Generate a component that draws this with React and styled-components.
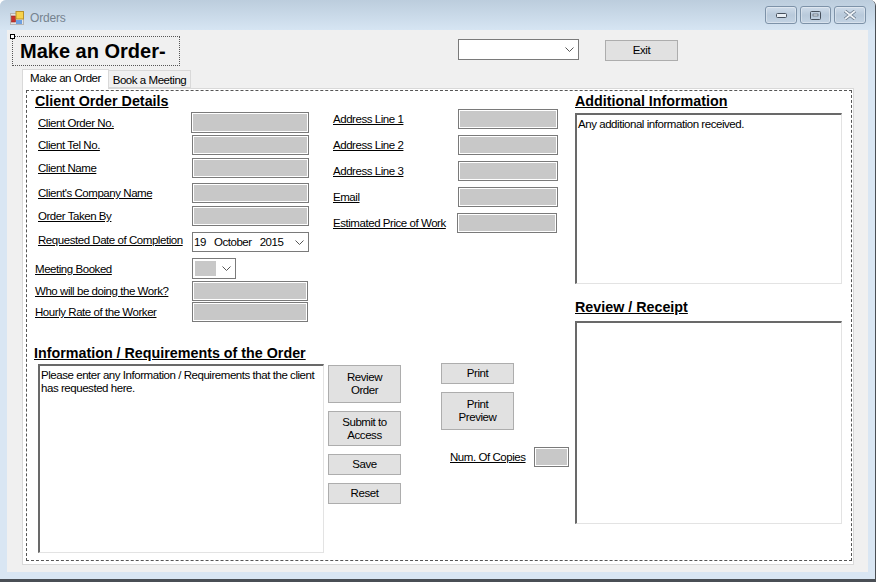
import styled, { createGlobalStyle } from "styled-components";

const GlobalStyle = createGlobalStyle`
  html, body {
    margin: 0;
    padding: 0;
    background: #fff;
  }
  * {
    box-sizing: border-box;
  }
`;

const WindowFrame = styled.div`
  width: 876px;
  height: 582px;
  overflow: hidden;
  display: flex;
  flex-direction: column;
  background: #d9e6f3;
  border-right: 1px solid #4a4f55;
  border-bottom: 3px solid #4a4f55;
  border-top-left-radius: 6px;
  border-top-right-radius: 6px;
  font-family: "Liberation Sans", Arial, sans-serif;
  font-size: 11.5px;
  letter-spacing: -0.45px;
  color: #000;
`;

const TitleBar = styled.div`
  height: 30px;
  flex: none;
  display: flex;
  align-items: center;
  padding: 6px 9px 0 10px;
  background: linear-gradient(#bccddd, #d6e5f3);
`;

const WindowTitle = styled.span`
  margin-left: 6px;
  font-size: 12px;
  letter-spacing: -0.2px;
  color: #76838f;
`;

const WindowButtons = styled.div`
  margin-left: auto;
  display: flex;
  gap: 3px;
  margin-top: -6px;
`;

const WindowButton = styled.div`
  width: ${(p) => p.$w}px;
  height: 18px;
  display: flex;
  align-items: center;
  justify-content: center;
  border: 1px solid #7d92a8;
  border-radius: 3px;
  background: linear-gradient(#cfdcea, #b9cadb 50%, #c3d3e3);
  box-shadow: inset 0 0 0 1px rgba(255, 255, 255, 0.35);
`;

const Client = styled.div`
  flex: none;
  width: 861px;
  height: 542px;
  margin-left: 7px;
  background: #f0f0f0;
`;

const TopBar = styled.div`
  display: flex;
  align-items: flex-start;
  height: 39px;
  padding: 6px 0 0 5px;
`;

const TitleBox = styled.div`
  position: relative;
  width: 168px;
  height: 30px;
  border: 1px dotted #555;
  padding-left: 7px;
  font-size: 20px;
  font-weight: bold;
  letter-spacing: 0;
  line-height: 29px;
`;

const Handle = styled.span`
  position: absolute;
  left: -3px;
  top: -3px;
  width: 5px;
  height: 5px;
  border: 1px solid #000;
  background: #fff;
`;

const ComboBox = styled.div`
  width: ${(p) => p.$w}px;
  height: 21px;
  margin: ${(p) => p.$m || 0};
  display: flex;
  align-items: center;
  justify-content: flex-end;
  padding-right: 4px;
  background: #fff;
  border: 1px solid #7a7a7a;
`;

const ComboFill = styled.span`
  width: 21px;
  height: 15px;
  margin-right: auto;
  margin-left: 2px;
  background: #c8c8c8;
`;

const PushButton = styled.button`
  width: 73px;
  height: ${(p) => p.$h || 21}px;
  margin: ${(p) => p.$m || 0};
  padding: 0;
  flex: none;
  background: #e1e1e1;
  border: 1px solid #adadad;
  font: inherit;
  letter-spacing: inherit;
  line-height: 13px;
  color: #000;
`;

const TabStrip = styled.div`
  display: flex;
  align-items: flex-end;
  height: 19px;
  padding-left: 15px;
`;

const Tab = styled.div`
  height: ${(p) => (p.$active ? 20 : 18)}px;
  width: ${(p) => p.$w}px;
  display: flex;
  align-items: center;
  justify-content: center;
  white-space: nowrap;
  margin-bottom: ${(p) => (p.$active ? -1 : 0)}px;
  padding-bottom: ${(p) => (p.$active ? 3 : 0)}px;
  padding-top: ${(p) => (p.$active ? 0 : 2)}px;
  background: ${(p) => (p.$active ? "#fff" : "#f0f0f0")};
  border: 1px solid #d9d9d9;
  border-bottom: ${(p) => (p.$active ? "none" : "1px solid #d9d9d9")};
  border-left: ${(p) => (p.$active ? "1px solid #d9d9d9" : "none")};
  position: relative;
`;

const TabPage = styled.div`
  width: 832px;
  height: 477px;
  margin-left: 15px;
  padding: 1px 0 0 3px;
  background: #fff;
  border: 1px solid #d9d9d9;
`;

const DashedPanel = styled.div`
  width: 826px;
  height: 471px;
  display: flex;
  border: 1px dashed #555;
`;

const LeftArea = styled.div`
  width: 548px;
  flex: none;
`;

const TopFields = styled.div`
  display: flex;
  height: 231px;
`;

const FieldColumn = styled.div`
  width: 306px;
  flex: none;
  padding-right: 24px;
`;

const AddressColumn = styled.div`
  width: 225px;
  flex: none;
  padding-top: 18px;
  display: flex;
  flex-direction: column;
  gap: 6px;
`;

const Heading = styled.h2`
  margin: ${(p) => p.$m || "1px 0 0"};
  padding-left: ${(p) => p.$indent || 0}px;
  height: 18px;
  font-size: 14.3px;
  letter-spacing: 0;
  line-height: 18px;
  font-weight: bold;
  text-decoration: underline;
  white-space: nowrap;
`;

const FieldRow = styled.div`
  display: flex;
  align-items: center;
  height: ${(p) => p.$h || 20}px;
  margin-top: ${(p) => p.$top || 0}px;
  padding-left: ${(p) => p.$indent ?? 11}px;
  padding-right: ${(p) => p.$right || 0}px;
`;

const FieldLabel = styled.span`
  margin-right: auto;
  padding-bottom: ${(p) => p.$lift || 0}px;
  text-decoration: underline;
  white-space: nowrap;
`;

const TextBox = styled.div`
  width: ${(p) => p.$w}px;
  height: 100%;
  flex: none;
  background: #c8c8c8;
  border: 1px solid #7a7a7a;
  box-shadow: inset 0 0 0 1px #fff;
`;

const DateBox = styled.div`
  width: 117px;
  height: 20px;
  display: flex;
  align-items: center;
  gap: 8px;
  padding: 0 4px 0 1px;
  background: #fff;
  border: 1px solid #7a7a7a;
`;

const DateChevron = styled.span`
  margin-left: auto;
  display: flex;
`;

const BottomArea = styled.div`
  display: flex;
  margin-top: 22px;
`;

const InfoColumn = styled.div`
  width: 301px;
  flex: none;
`;

const Memo = styled.div`
  width: ${(p) => p.$w}px;
  height: ${(p) => p.$h}px;
  margin: ${(p) => p.$m || 0};
  padding: 3px 2px 3px 1px;
  line-height: 13px;
  background: #fff;
  border-style: solid;
  border-color: #696969 #e3e3e3 #e3e3e3 #696969;
  border-width: 2px 1px 1px 2px;
`;

const ButtonColumn = styled.div`
  width: 73px;
  margin-top: 21px;
  display: flex;
  flex-direction: column;
  gap: 8px;
`;

const PrintColumn = styled.div`
  width: 128px;
  margin: 19px 0 0 40px;
  display: flex;
  flex-direction: column;
  gap: 8px;
`;

const CopiesRow = styled.div`
  display: flex;
  align-items: center;
  height: 20px;
  margin-top: 9px;
  padding-left: 9px;
`;

const RightColumn = styled.div`
  width: 267px;
  flex: none;
`;

const Chevron = () => (
  <svg width="9" height="5" viewBox="0 0 9 5" fill="none">
    <path d="M0.5 0.5 L4.5 4.5 L8.5 0.5" stroke="#555" strokeWidth="1" />
  </svg>
);

const AppIcon = () => (
  <svg width="14" height="14" viewBox="0 0 14 14">
    <rect x="0.5" y="2.5" width="13" height="11" fill="#e4e4e4" stroke="#b5b5b5" />
    <rect x="1.5" y="5" width="4" height="6" fill="#c8322d" stroke="#8f2320" strokeWidth="0.6" />
    <rect x="6" y="0.5" width="7.5" height="7.5" fill="#f7d24a" stroke="#b9912a" />
    <rect x="6" y="9" width="6" height="4" fill="#6d9fe0" />
  </svg>
);

const MinIcon = () => (
  <svg width="11" height="5" viewBox="0 0 11 5">
    <rect x="0.5" y="0.5" width="10" height="4" rx="1" fill="#e8eef4" stroke="#46505c" />
  </svg>
);

const MaxIcon = () => (
  <svg width="11" height="9" viewBox="0 0 11 9">
    <rect x="0.5" y="0.5" width="10" height="8" rx="1" fill="none" stroke="#46505c" />
    <rect x="3" y="3" width="5" height="2" fill="#dfe7ef" stroke="#46505c" strokeWidth="0.6" />
  </svg>
);

const CloseIcon = () => (
  <svg width="14" height="10" viewBox="0 0 14 10">
    <path d="M2 1 L12 9 M12 1 L2 9" stroke="#69788a" strokeWidth="3.4" />
    <path d="M2 1 L12 9 M12 1 L2 9" stroke="#eef2f6" strokeWidth="1.8" />
  </svg>
);

const clientFields = [
  { label: "Client Order No.", h: 21, w: 118, top: 2 },
  { label: "Client Tel No.", top: 2 },
  { label: "Client Name", top: 3 },
  { label: "Client's Company Name", top: 5 },
  { label: "Order Taken By", top: 3 },
];

const addressFields = [
  { label: "Address Line 1" },
  { label: "Address Line 2" },
  { label: "Address Line 3" },
  { label: "Email" },
  { label: "Estimated Price of Work", right: 1 },
];

export default function App() {
  return (
    <>
      <GlobalStyle />
      <WindowFrame>
        <TitleBar>
          <AppIcon />
          <WindowTitle>Orders</WindowTitle>
          <WindowButtons>
            <WindowButton $w={32}><MinIcon /></WindowButton>
            <WindowButton $w={31}><MaxIcon /></WindowButton>
            <WindowButton $w={32}><CloseIcon /></WindowButton>
          </WindowButtons>
        </TitleBar>
        <Client>
          <TopBar>
            <TitleBox>
              <Handle />
              Make an Order-
            </TitleBox>
            <ComboBox $w={121} $m="3px 0 0 278px"><Chevron /></ComboBox>
            <PushButton $m="4px 0 0 26px">Exit</PushButton>
          </TopBar>
          <TabStrip>
            <Tab $active $w={87}>Make an Order</Tab>
            <Tab $w={82}>Book a Meeting</Tab>
          </TabStrip>
          <TabPage>
            <DashedPanel>
              <LeftArea>
                <TopFields>
                  <FieldColumn>
                    <Heading $indent={8}>Client Order Details</Heading>
                    {clientFields.map((f) => (
                      <FieldRow key={f.label} $h={f.h} $top={f.top}>
                        <FieldLabel>{f.label}</FieldLabel>
                        <TextBox $w={f.w || 117} />
                      </FieldRow>
                    ))}
                    <FieldRow $top={6}>
                      <FieldLabel $lift={4}>Requested Date of Completion</FieldLabel>
                      <DateBox>
                        <span>19</span>
                        <span>October</span>
                        <span>2015</span>
                        <DateChevron><Chevron /></DateChevron>
                      </DateBox>
                    </FieldRow>
                    <FieldRow $h={21} $top={6} $indent={8}>
                      <FieldLabel>Meeting Booked</FieldLabel>
                      <ComboBox $w={44} $m="0 73px 0 0">
                        <ComboFill />
                        <Chevron />
                      </ComboBox>
                    </FieldRow>
                    <FieldRow $top={2} $indent={8} $right={1}>
                      <FieldLabel>Who will be doing the Work?</FieldLabel>
                      <TextBox $w={116} />
                    </FieldRow>
                    <FieldRow $top={1} $indent={8} $right={1}>
                      <FieldLabel>Hourly Rate of the Worker</FieldLabel>
                      <TextBox $w={116} />
                    </FieldRow>
                  </FieldColumn>
                  <AddressColumn>
                    {addressFields.map((f) => (
                      <FieldRow key={f.label} $indent={0} $right={f.right}>
                        <FieldLabel>{f.label}</FieldLabel>
                        <TextBox $w={100} />
                      </FieldRow>
                    ))}
                  </AddressColumn>
                </TopFields>
                <BottomArea>
                  <InfoColumn>
                    <Heading $m="0" $indent={7}>Information / Requirements of the Order</Heading>
                    <Memo $w={286} $h={189} $m="2px 0 0 11px">
                      Please enter any Information / Requirements that the client has requested here.
                    </Memo>
                  </InfoColumn>
                  <ButtonColumn>
                    <PushButton $h={38}>Review<br />Order</PushButton>
                    <PushButton $h={35}>Submit to<br />Access</PushButton>
                    <PushButton>Save</PushButton>
                    <PushButton>Reset</PushButton>
                  </ButtonColumn>
                  <PrintColumn>
                    <PushButton>Print</PushButton>
                    <PushButton $h={38}>Print<br />Preview</PushButton>
                    <CopiesRow>
                      <FieldLabel>Num. Of Copies</FieldLabel>
                      <TextBox $w={35} />
                    </CopiesRow>
                  </PrintColumn>
                </BottomArea>
              </LeftArea>
              <RightColumn>
                <Heading>Additional Information</Heading>
                <Memo $w={267} $h={171} $m="3px 0 0">
                  Any additional information received.
                </Memo>
                <Heading $m="14px 0 0">Review / Receipt</Heading>
                <Memo $w={267} $h={203} $m="5px 0 0" />
              </RightColumn>
            </DashedPanel>
          </TabPage>
        </Client>
      </WindowFrame>
    </>
  );
}
